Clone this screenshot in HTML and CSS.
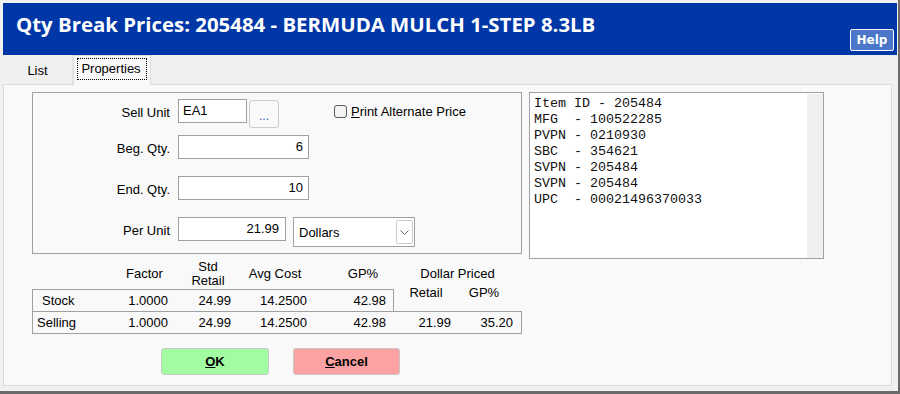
FILE: index.html
```html
<!DOCTYPE html>
<html lang="en">
<head>
    <meta charset="UTF-8">
    <meta name="viewport" content="width=device-width, initial-scale=1.0">
    <title>Qty Break Prices</title>
    <link rel="stylesheet" href="styles.css">
</head>
<body>

<div class="window">
    <div class="titlebar">
        <h1 class="title">Qty Break Prices: 205484 - BERMUDA MULCH 1-STEP 8.3LB</h1>
        <button class="help">Help</button>
    </div>

    <div class="tabs">
        <div class="tab">List</div>
        <div class="tab active"><span class="focus">Properties</span></div>
    </div>

    <div class="panel">
        <div class="top">
            <div class="groupbox">
                <div class="row r1">
                    <span class="lbl">Sell Unit</span>
                    <div class="field unit">EA1</div>
                    <button class="more">...</button>
                    <label class="check"><span class="box"></span><span><u>P</u>rint Alternate Price</span></label>
                </div>
                <div class="row r2">
                    <span class="lbl">Beg. Qty.</span>
                    <div class="field qty">6</div>
                </div>
                <div class="row r3">
                    <span class="lbl">End. Qty.</span>
                    <div class="field qty">10</div>
                </div>
                <div class="row r4">
                    <span class="lbl">Per Unit</span>
                    <div class="field price">21.99</div>
                    <div class="select">
                        <span>Dollars</span>
                        <span class="arrow">
                            <svg width="9" height="5" viewBox="0 0 9 5"><path d="M0.5 0.5 L4.5 4.5 L8.5 0.5" fill="none" stroke="#606060" stroke-width="1"/></svg>
                        </span>
                    </div>
                </div>
            </div>

            <div class="ids">
<pre class="lines">Item ID - 205484
MFG  - 100522285
PVPN - 0210930
SBC  - 354621
SVPN - 205484
SVPN - 205484
UPC  - 00021496370033</pre>
                <div class="scroll"></div>
            </div>
        </div>

        <div class="head">
            <span class="h-factor">Factor</span>
            <span class="h-std">Std<br>Retail</span>
            <span class="h-avg">Avg Cost</span>
            <span class="h-gp">GP%</span>
            <span class="h-dollar">Dollar Priced</span>
        </div>

        <div class="stock-row">
            <div class="stock">
                <span class="c0 pad-stock">Stock</span>
                <span class="c1">1.0000</span>
                <span class="c2">24.99</span>
                <span class="c3">14.2500</span>
                <span class="c4">42.98</span>
            </div>
            <span class="sub s-retail">Retail</span>
            <span class="sub s-gp">GP%</span>
        </div>
        <div class="selling">
            <span class="c0 pad-selling">Selling</span>
            <span class="c1">1.0000</span>
            <span class="c2">24.99</span>
            <span class="c3">14.2500</span>
            <span class="c4">42.98</span>
            <span class="c5">21.99</span>
            <span class="c6">35.20</span>
        </div>

        <div class="actions">
            <button class="btn ok"><u>O</u>K</button>
            <button class="btn cancel"><u>C</u>ancel</button>
        </div>
    </div>
</div>

</body>
</html>
```

FILE: styles.css
```css
body {
    margin: 0;
    background-color: #f0f0f0;
    font-family: "Liberation Sans", Arial, sans-serif;
    font-size: 13px;
    color: #000;
}
.window {
    width: 900px;
    height: 394px;
    box-sizing: border-box;
    padding: 3px 1px 3px 3px;
    border-right: 2px solid #6b6b6b;
    border-bottom: 3px solid #6b6b6b;
}
.titlebar {
    height: 52px;
    box-sizing: border-box;
    background-color: #0037a7;
    display: flex;
    justify-content: space-between;
    align-items: flex-end;
    padding: 0 3px 4px 13px;
}
.title {
    align-self: flex-start;
    margin: 0;
    padding-top: 9px;
    font: bold 20.4px/24px "Open Sans", sans-serif;
    color: #fff;
}
.help {
    width: 44px;
    height: 22px;
    padding: 0;
    border: 1px solid #fff;
    border-radius: 2px;
    background-color: #4a77c8;
    color: #fff;
    font: bold 12px "DejaVu Sans", sans-serif;
}

/* tabs */
.tabs {
    display: flex;
    align-items: flex-end;
    height: 29px;
}
.tab {
    width: 70px;
    height: 27px;
    box-sizing: border-box;
    border-right: 1px solid #e3e3e3;
    text-align: center;
    line-height: 27px;
}
.tab.active {
    width: 78px;
    height: 30px;
    margin-bottom: -1px;
    position: relative;
    border: 1px solid #dcdcdc;
    border-bottom: none;
    background-color: #f9f9f9;
    line-height: 20px;
    padding-top: 2px;
}
.focus {
    display: inline-block;
    border: 1px dotted #000;
    padding: 0 5px 0 3px;
}

.panel {
    width: 889px;
    height: 302px;
    box-sizing: border-box;
    border: 1px solid #dcdcdc;
    background-color: #f9f9f9;
    padding: 7px 0 0 28px;
}
.top {
    display: flex;
    align-items: flex-start;
    gap: 7px;
}

/* group box */
.groupbox {
    width: 490px;
    height: 162px;
    box-sizing: border-box;
    border: 1px solid #a0a0a0;
    padding-top: 6px;
}
.row {
    display: flex;
    align-items: flex-start;
}
.r1 { height: 36px; }
.r2, .r3 { height: 41px; }
.lbl {
    width: 137px;
    margin-right: 8px;
    text-align: right;
    line-height: 24px;
    padding-top: 2px;
}
.field {
    height: 24px;
    box-sizing: border-box;
    border: 1px solid #a0a0a0;
    background-color: #fff;
    line-height: 22px;
    padding: 0 5px;
}
.unit {
    width: 69px;
    padding-left: 4px;
}
.qty {
    width: 131px;
    text-align: right;
}
.price {
    width: 108px;
    text-align: right;
    padding-right: 6px;
}
.more {
    width: 30px;
    height: 28px;
    margin: 1px 0 0 2px;
    padding: 0;
    border: 1px solid #cccccc;
    border-radius: 3px;
    background-color: #f9f9f9;
    color: #3366cc;
    font: 12px "Liberation Sans", sans-serif;
    line-height: 30px;
}
.check {
    display: flex;
    align-items: center;
    gap: 4px;
    margin: 5px 0 0 55px;
    line-height: 15px;
}
.box {
    width: 13px;
    height: 13px;
    box-sizing: border-box;
    border: 1px solid #5a5a5a;
    border-radius: 3px;
    background-color: #f4f4f4;
}
.select {
    width: 122px;
    height: 30px;
    box-sizing: border-box;
    margin-left: 7px;
    border: 1px solid #a0a0a0;
    background-color: #fff;
    display: flex;
    align-items: center;
    justify-content: space-between;
    padding-left: 5px;
}
.arrow {
    width: 17px;
    height: 24px;
    box-sizing: border-box;
    margin-right: 1px;
    border: 1px solid #cccccc;
    border-radius: 2px;
    display: flex;
    align-items: center;
    justify-content: center;
}

/* item ids */
.ids {
    width: 295px;
    height: 167px;
    box-sizing: border-box;
    border: 1px solid #a0a0a0;
    background-color: #fff;
    display: flex;
    padding-top: 1px;
}
.lines {
    flex: 1;
    margin: 0;
    padding: 2px 0 0 4px;
    font: 13.33px/16px "Liberation Mono", "Courier New", monospace;
    color: #111;
}
.scroll {
    width: 16px;
    background-color: #f0f0f0;
}

/* price table */
.head {
    display: flex;
    align-items: center;
    height: 28px;
    margin-top: 1px;
    line-height: 14px;
    text-align: center;
}
.h-factor { margin-left: 85px; width: 55px; }
.h-std { width: 72px; }
.h-avg { width: 62px; }
.h-gp { width: 114px; }
.h-dollar { width: 75px; }
.stock-row {
    display: flex;
    margin-top: 1px;
}
.stock {
    width: 362px;
    height: 22px;
    box-sizing: border-box;
    border: 1px solid #a0a0a0;
    border-bottom: none;
    display: flex;
    align-items: center;
}
.sub {
    line-height: 14px;
    margin-top: -3px;
    text-align: center;
}
.s-retail { width: 64px; }
.s-gp { width: 52px; }
.selling {
    width: 490px;
    height: 23px;
    box-sizing: border-box;
    border: 1px solid #a0a0a0;
    display: flex;
    align-items: center;
}
.c0 { width: 77px; box-sizing: border-box; }
.pad-stock { padding-left: 9px; }
.pad-selling { padding-left: 4px; }
.c1, .c2, .c3, .c4, .c5, .c6 { text-align: right; }
.c1 { width: 58px; }
.c2 { width: 63px; }
.c3 { width: 76px; }
.c4 { width: 79px; }
.c5 { width: 65px; }
.c6 { width: 62px; }

.actions {
    display: flex;
    gap: 24px;
    margin: 14px 0 0 129px;
}
.btn {
    width: 108px;
    height: 27px;
    padding: 0;
    border: 1px solid #c8c8c8;
    border-radius: 3px;
    font: bold 13px "Liberation Sans", Arial, sans-serif;
    color: #000;
}
.ok { background-color: #a2fda2; }
.cancel { width: 107px; background-color: #fda2a2; }
```
